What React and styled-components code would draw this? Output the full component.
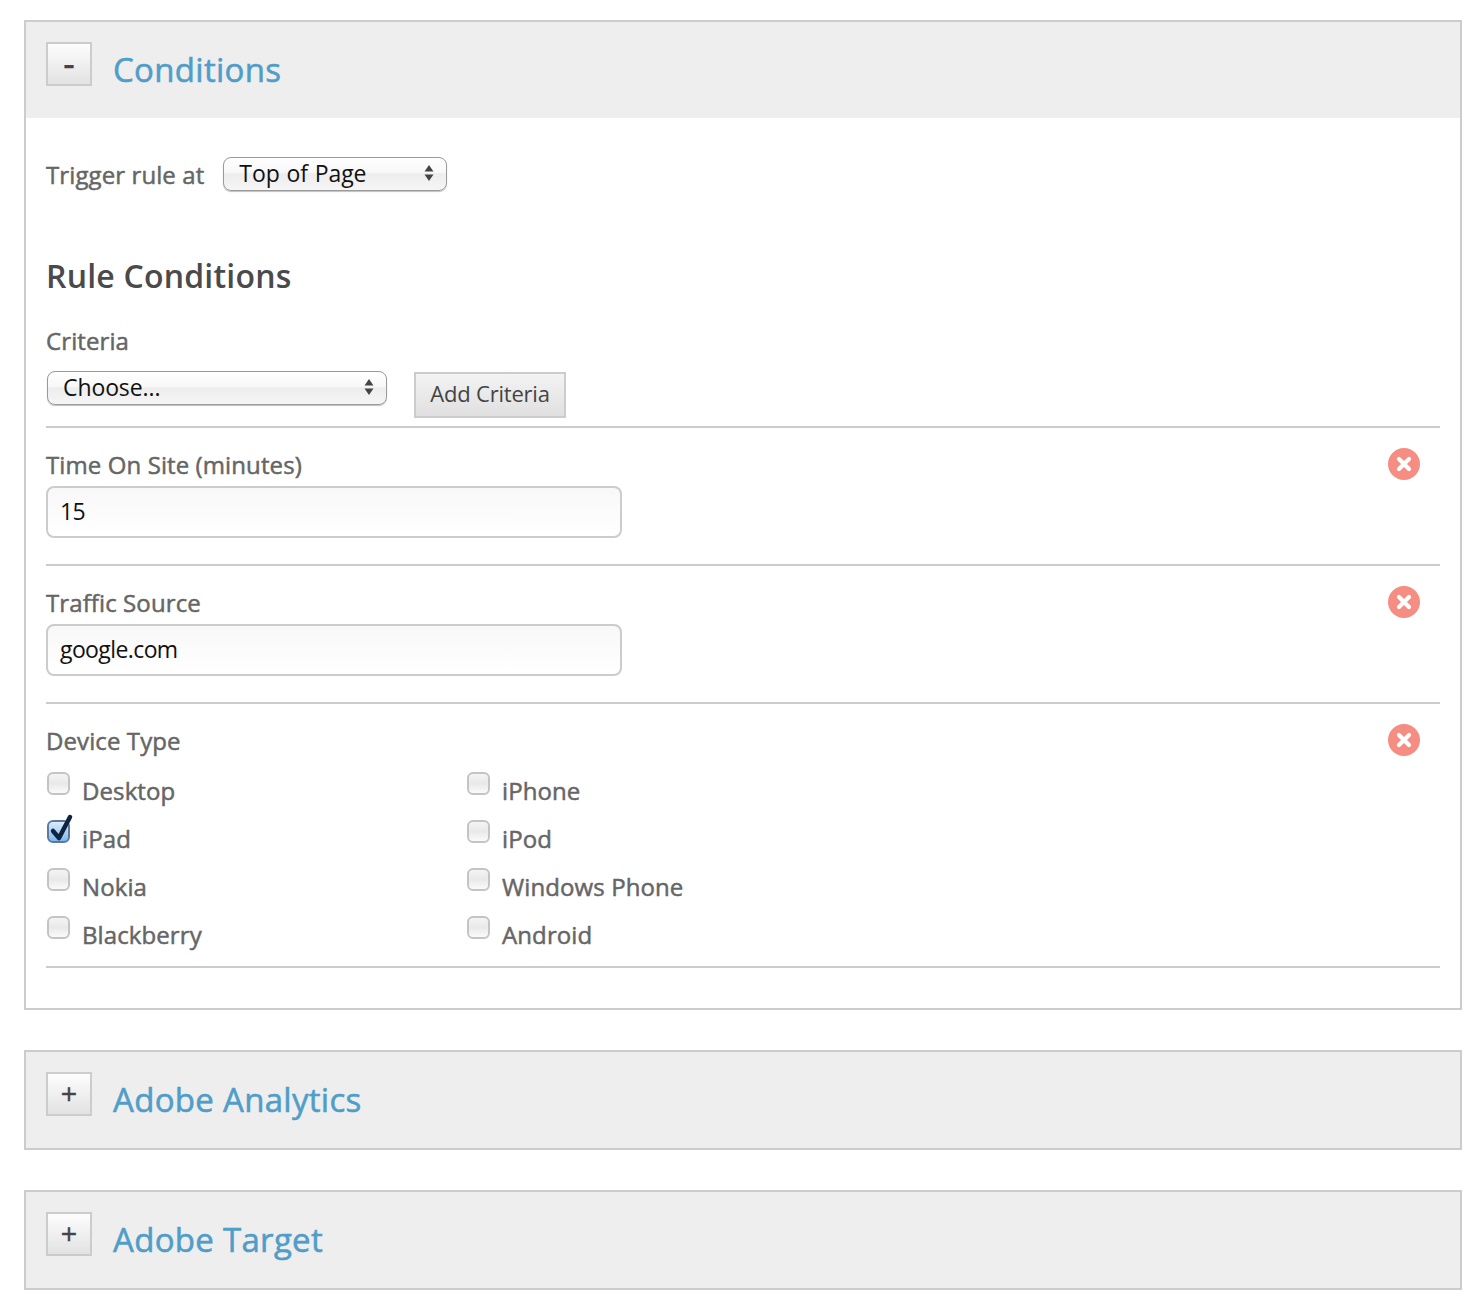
import React from "react";
import styled, { createGlobalStyle } from "styled-components";

const Global = createGlobalStyle`
  html, body { margin: 0; padding: 0; background: #fff; }
  body { font-family: "Open Sans", "Noto Sans", sans-serif; color: #666; }
  * { box-sizing: border-box; }
`;

const Page = styled.div`
  width: 1484px;
  height: 1312px;
  padding: 20px 22px 0 24px;
  display: flex;
  flex-direction: column;
  gap: 40px;
`;

const Panel = styled.section`
  border: 2px solid #ccc;
`;

const Header = styled.header`
  height: 96px;
  background: #eee;
  display: flex;
  align-items: flex-start;
  padding: 20px 20px 0;
  gap: 21px;
`;

const Toggle = styled.button`
  width: 46px;
  height: 44px;
  padding: 0;
  border: 2px solid #ccc;
  background: linear-gradient(#fdfdfd, #e2e2e2);
  color: #444;
  font: 400 ${(p) => (p.$minus ? 36 : 28)}px/1 "Liberation Sans", sans-serif;
  -webkit-text-stroke: 0.3px #444;
  display: flex;
  align-items: center;
  justify-content: center;
`;

const Title = styled.h2`
  margin: 5px 0 0;
  font-size: 33px;
  line-height: 46px;
  font-weight: 400;
  letter-spacing: 0.3px;
  -webkit-text-stroke: 0.55px #4f9dc8;
  color: #4f9dc8;
`;

const Body = styled.div`
  padding: 39px 20px 40px;
`;

const TriggerRow = styled.div`
  display: flex;
  align-items: flex-start;
  gap: 19px;
  height: 34px;
`;

const Label = styled.label`
  display: block;
  font-size: 24px;
  line-height: 34px;
  font-weight: 400;
  letter-spacing: 0.1px;
  -webkit-text-stroke: 0.5px #666;
  color: #666;
  white-space: nowrap;
`;

const TriggerLabel = styled(Label)`
  margin-top: 1px;
`;

const Select = styled.div`
  width: ${(p) => p.$w}px;
  height: 34px;
  margin-left: ${(p) => p.$ml || 0}px;
  border: 1px solid #9a9a9a;
  border-radius: 8px;
  background: linear-gradient(#fff 0, #f8f8f8 45%, #ededed 50%, #f5f5f5 100%);
  box-shadow: 0 1px 1px rgba(0, 0, 0, 0.25);
  display: flex;
  align-items: center;
  justify-content: space-between;
  padding: 0 12px 2px 15px;
  font-size: 23px;
  letter-spacing: -0.1px;
  word-spacing: 1px;
  color: #111;
  white-space: nowrap;
`;

const Arrows = () => (
  <svg width="10" height="18" viewBox="0 0 10 18" aria-hidden="true">
    <path d="M5 1 9.5 7.5H.5Z" fill="#444" />
    <path d="M5 17 9.5 10.500H.5Z" fill="#444" />
  </svg>
);

const Heading = styled.h3`
  margin: 63px 0 0;
  font-size: 32px;
  line-height: 44px;
  font-weight: 600;
  letter-spacing: 0.2px;
  color: #4a4a4a;
`;

const CriteriaLabel = styled(Label)`
  margin-top: 26px;
`;

const CriteriaRow = styled.div`
  display: flex;
  align-items: flex-start;
  margin-top: 13px;
  height: 55px;
`;

const AddButton = styled.button`
  width: 152px;
  height: 46px;
  margin: 1px 0 0 27px;
  padding: 0 0 4px;
  border: 2px solid #ccc;
  background: linear-gradient(#f3f3f3, #e0e0e0);
  color: #444;
  font-family: inherit;
  font-size: 22px;
  letter-spacing: -0.2px;
`;

const Criterion = styled.div`
  border-top: 2px solid #ccc;
  display: flex;
  justify-content: space-between;
  align-items: flex-start;
  padding: 20px 20px 0 0;
  height: ${(p) => p.$h}px;
`;

const Field = styled.div`
  display: flex;
  flex-direction: column;
`;

const TextInput = styled.div`
  width: 576px;
  height: 52px;
  margin-top: 4px;
  padding: 0 12px 2px;
  border: 2px solid #ccc;
  border-radius: 8px;
  background: linear-gradient(#f8f8f8, #fff);
  display: flex;
  align-items: center;
  font-size: 23px;
  letter-spacing: -0.6px;
  color: #111;
`;

const Close = () => (
  <svg width="32" height="32" viewBox="0 0 32 32" aria-hidden="true">
    <circle cx="16" cy="16" r="16" fill="#f58d83" />
    <path d="M11 11 21 21M21 11 11 21" stroke="#fff" strokeWidth="4.200" strokeLinecap="round" />
  </svg>
);

const DeviceGrid = styled.div`
  display: grid;
  grid-template-columns: 420px 420px;
  grid-auto-rows: 48px;
  margin-top: 13px;
`;

const Device = styled.div`
  display: flex;
  align-items: flex-start;
  gap: 12px;
  padding-left: 1px;
`;

const Box = styled.span`
  position: relative;
  display: block;
  width: 23px;
  height: 23px;
  margin-top: 1px;
  border: 2px solid ${(p) => (p.$checked ? "#5d7a9e" : "#c4c4c4")};
  border-radius: 6px;
  background: ${(p) =>
    p.$checked ? "linear-gradient(#dcecfc, #7db8ef)" : "linear-gradient(#f4f4f4, #e9e9e9 50%, #fafafa)"};
`;

const Tick = styled.svg`
  position: absolute;
  left: -1px;
  top: -9px;
`;

const DeviceName = styled(Label)`
  margin-top: 3px;
`;

const BottomRule = styled.div`
  border-top: 2px solid #ccc;
`;

const devices = [
  ["Desktop", false], ["iPhone", false],
  ["iPad", true], ["iPod", false],
  ["Nokia", false], ["Windows Phone", false],
  ["Blackberry", false], ["Android", false],
];

const Collapsed = ({ title }) => (
  <Panel>
    <Header>
      <Toggle>+</Toggle>
      <Title>{title}</Title>
    </Header>
  </Panel>
);

export default function App() {
  return (
    <Page>
      <Global />
      <Panel>
        <Header>
          <Toggle $minus>-</Toggle>
          <Title>Conditions</Title>
        </Header>
        <Body>
          <TriggerRow>
            <TriggerLabel>Trigger rule at</TriggerLabel>
            <Select $w={224}>Top of Page<Arrows /></Select>
          </TriggerRow>
          <Heading>Rule Conditions</Heading>
          <CriteriaLabel>Criteria</CriteriaLabel>
          <CriteriaRow>
            <Select $w={340} $ml={1}>Choose...<Arrows /></Select>
            <AddButton>Add Criteria</AddButton>
          </CriteriaRow>
          <Criterion $h={138}>
            <Field>
              <Label>Time On Site (minutes)</Label>
              <TextInput>15</TextInput>
            </Field>
            <Close />
          </Criterion>
          <Criterion $h={138}>
            <Field>
              <Label>Traffic Source</Label>
              <TextInput>google.com</TextInput>
            </Field>
            <Close />
          </Criterion>
          <Criterion $h={264}>
            <Field>
              <Label>Device Type</Label>
              <DeviceGrid>
                {devices.map(([name, checked]) => (
                  <Device key={name}>
                    <Box $checked={checked}>
                      {checked && (
                        <Tick width="28" height="30" viewBox="0 0 28 30" aria-hidden="true">
                          <path d="M5 18 11 25 22 4" fill="none" stroke="#0d2340" strokeWidth="4.500" strokeLinecap="round" strokeLinejoin="round" />
                        </Tick>
                      )}
                    </Box>
                    <DeviceName>{name}</DeviceName>
                  </Device>
                ))}
              </DeviceGrid>
            </Field>
            <Close />
          </Criterion>
          <BottomRule />
        </Body>
      </Panel>
      <Collapsed title="Adobe Analytics" />
      <Collapsed title="Adobe Target" />
    </Page>
  );
}
